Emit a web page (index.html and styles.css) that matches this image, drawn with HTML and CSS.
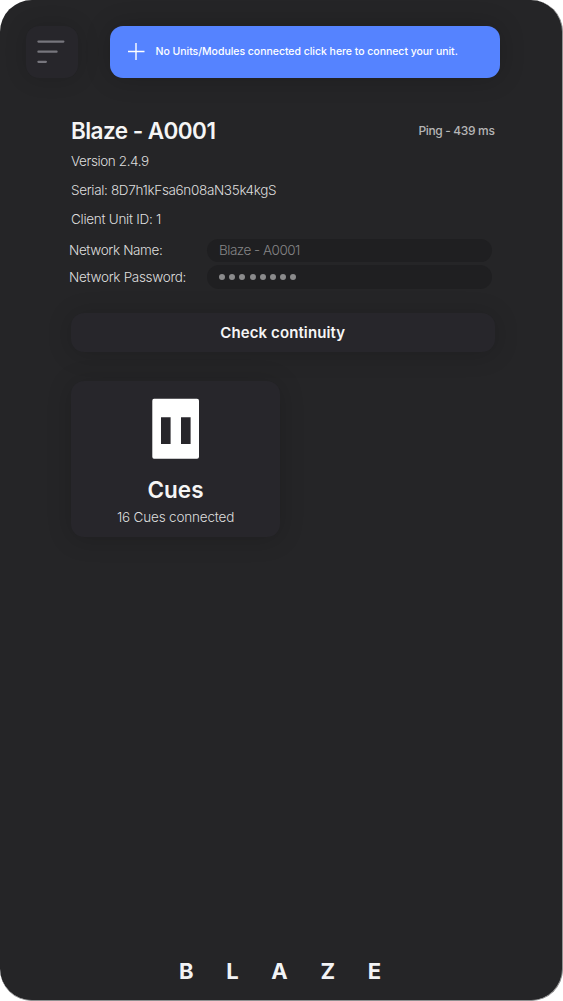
FILE: index.html
```html
<!DOCTYPE html>
<html lang="en">
<head>
<meta charset="utf-8">
<title>Blaze - A0001</title>
<link rel="stylesheet" href="styles.css">
</head>
<body>
<div class="app">
  <header class="topbar">
    <button class="menu" aria-label="Menu">
      <svg width="53" height="53" viewBox="0 0 53 53"><path d="M12.4 15.6H37.4M12.4 25.7H30.6M12.4 35.8H19.9" stroke="#77767d" stroke-width="2.2" stroke-linecap="round"/></svg>
    </button>
    <a class="banner">
      <svg width="17" height="17" viewBox="0 0 17 17"><path d="M8 0V17M0 8.5H16.5" stroke="#fff" stroke-width="1.4"/></svg>
      <span class="banner-text">No Units/Modules connected click here to connect your unit.</span>
    </a>
  </header>
  <main class="content">
    <div class="heading">
      <h1 class="title">Blaze - A0001</h1>
      <span class="ping">Ping - 439 ms</span>
    </div>
    <div class="details">
      <p class="version">Version 2.4.9</p>
      <p class="serial">Serial: 8D7h1kFsa6n08aN35k4kgS</p>
      <p class="client">Client Unit ID: 1</p>
    </div>
    <div class="network">
      <span class="label label-name">Network Name:</span>
      <div class="field field-name">Blaze - A0001</div>
      <span class="label label-password">Network Password:</span>
      <div class="field dots"><i></i><i></i><i></i><i></i><i></i><i></i><i></i><i></i></div>
    </div>
    <button class="check"><span class="check-text">Check continuity</span></button>
    <section class="card">
      <svg class="cue-icon" width="47" height="61" viewBox="0 0 47 61"><path fill="#fff" fill-rule="evenodd" d="M2 .8H45Q47 .8 47 2.8V58.8Q47 60.8 45 60.8H2Q.3 60.8 .3 58.8V2.8Q.3 .8 2 .8ZM9 19.3V46H18.6V19.3ZM29 19.3V46H38.6V19.3Z"/></svg>
      <h2 class="card-title">Cues</h2>
      <p class="card-note">16 Cues connected</p>
    </section>
  </main>
  <footer class="brand"><span>B</span><span>L</span><span>A</span><span>Z</span><span>E</span></footer>
</div>
</body>
</html>
```
FILE: styles.css
```css
* { box-sizing: border-box; }
body { margin: 0; background: #fff; font-family: Inter, "Liberation Sans", sans-serif; color: #f5f5f5; }
h1, h2, p { margin: 0; font-weight: inherit; }
button { border: 0; padding: 0; font: inherit; color: inherit; }
svg { display: block; flex: none; }
.app { width: 563px; height: 1001px; border-radius: 32px; border: solid #919192; border-width: 0 1px 1px 0; background: #252527; display: flex; flex-direction: column; overflow: hidden; white-space: nowrap; }
.topbar { display: flex; gap: 31.5px; padding: 25.5px 0 0 25.5px; }
.menu { width: 52.5px; height: 52.5px; border-radius: 13px; background: #27262b; box-shadow: 0 0 22px rgba(0, 0, 0, .16); }
.banner { width: 390px; height: 52.5px; border-radius: 13px; background: #5583ff; display: flex; align-items: center; padding-left: 18px; gap: 11px; box-shadow: 0 0 26px rgba(0, 0, 0, .2); }
.banner-text { font-size: 10.5px; font-weight: 500; color: #fff; letter-spacing: -.03px; }
.content { display: flex; flex-direction: column; padding: 38.5px 67.5px 0 71px; }
.heading { display: flex; justify-content: space-between; line-height: 28px; }
.title { font-size: 22.5px; font-weight: 600; letter-spacing: -.55px; }
.ping { font-size: 12px; font-weight: 500; color: #b5b5b6; letter-spacing: -.35px; }
.details { font-size: 13.5px; font-weight: 300; line-height: 29.2px; color: #dedede; margin-top: 2px; }
.version { letter-spacing: -.4px; }
.serial { letter-spacing: -.34px; }
.client { letter-spacing: -.28px; }
.network { display: grid; grid-template-columns: 138px 285px; row-gap: 3.5px; margin: 4.5px 0 0 -2px; align-items: center; font-size: 13.5px; font-weight: 300; color: #dedede; }
.label-name { letter-spacing: -.36px; }
.label-password { letter-spacing: -.3px; }
.field { height: 23.3px; line-height: 23px; border-radius: 12px; background: #1f1f21; padding-left: 12px; color: #858586; }
.field-name { letter-spacing: -.5px; }
.dots { display: flex; align-items: center; gap: 4.2px; }
.dots i { width: 6px; height: 6px; border-radius: 50%; background: #8b8b8c; }
.check { height: 39px; margin-top: 24px; border-radius: 13px; background: #27262b; box-shadow: 0 2px 24px rgba(0, 0, 0, .18); font-size: 15px; font-weight: 600; letter-spacing: .1px; }
.card { width: 209px; height: 156px; margin-top: 29px; border-radius: 13px; background: #27262b; box-shadow: 0 2px 24px rgba(0, 0, 0, .18); display: flex; flex-direction: column; align-items: center; padding-top: 17.5px; }
.card-title { font-size: 22.5px; font-weight: 600; line-height: 28px; margin-top: 17px; }
.card-note { font-size: 13.5px; font-weight: 300; line-height: 20px; margin-top: 3px; color: #dedede; letter-spacing: -.18px; }
.brand { margin-top: auto; display: flex; justify-content: space-between; width: 202px; margin-left: 179px; padding-bottom: 15px; font-size: 22px; line-height: 28px; font-weight: 700; color: #f2f3f5; }
```
